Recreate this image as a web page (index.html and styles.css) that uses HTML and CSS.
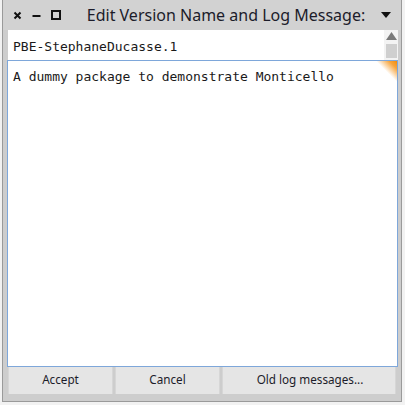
FILE: index.html
```html
<!DOCTYPE html>
<html>
<head>
<meta charset="utf-8">
<link rel="stylesheet" href="styles.css">
</head>
<body>
<div class="window">
  <div class="titlebar">
    <div class="controls">
      <svg class="ctl" width="9" height="9" viewBox="0 0 9 9"><path d="M1.5 1.5 L7.5 7.5 M7.5 1.5 L1.5 7.5" stroke="#111" stroke-width="2"/></svg>
      <svg class="ctl" width="9" height="9" viewBox="0 0 9 9"><path d="M0.5 5 H8.5" stroke="#111" stroke-width="2"/></svg>
      <svg class="ctl" width="10" height="10" viewBox="0 0 10 10"><rect x="1" y="1" width="8" height="8" fill="none" stroke="#111" stroke-width="2"/></svg>
    </div>
    <div class="title">Edit Version Name and Log Message:</div>
    <svg class="menu" width="10" height="6" viewBox="0 0 10 6"><path d="M0 0 H10 L5 6 Z" fill="#111"/></svg>
  </div>
  <div class="content">
    <div class="namerow">
      <div class="namefield">PBE-StephaneDucasse.1</div>
      <div class="scrollbar">
        <svg class="arrow" width="11" height="8" viewBox="0 0 11 8"><path d="M0 8 L5.5 0 L11 8 Z" fill="#7a7a7a"/></svg>
        <div class="thumb"></div>
      </div>
    </div>
    <div class="textarea">
      <div class="text">A dummy package to demonstrate Monticello</div>
      <div class="corner"></div>
    </div>
    <div class="buttons">
      <div class="btn btn-fixed">Accept</div>
      <div class="btn btn-fixed">Cancel</div>
      <div class="btn btn-grow">Old log messages...</div>
    </div>
  </div>
</div>
</body>
</html>
```

FILE: styles.css
```css
html, body {
  margin: 0;
  padding: 0;
  background: #f2f2f2;
}
body {
  width: 405px;
  height: 405px;
}
.window {
  margin-left: 2px;
  width: 400px;
  height: 402px;
  box-sizing: border-box;
  background: #cdcdcd;
  border: 1px solid #9a9a9a;
  border-top: none;
  display: flex;
  flex-direction: column;
  font-family: "Noto Sans", "DejaVu Sans", sans-serif;
  color: #1a1a1a;
}
.titlebar {
  height: 30px;
  display: flex;
  align-items: center;
  position: relative;
  background: #d2d2d2;
}
.controls {
  display: flex;
  align-items: center;
  gap: 10px;
  padding-left: 10px;
}
.ctl {
  display: block;
}
.title {
  flex: 1;
  text-align: center;
  font-size: 16px;
  padding-left: 16px;
  color: #1c1c2a;
  white-space: nowrap;
}
.menu {
  margin-right: 10px;
  margin-left: 6px;
}
.content {
  flex: 1;
  display: flex;
  flex-direction: column;
  padding: 0 3px 7px 4px;
}
.namerow {
  height: 30px;
  display: flex;
  margin-left: 1px;
}
.namefield {
  flex: 1;
  background: #ffffff;
  font-family: "DejaVu Sans Mono", monospace;
  font-size: 13px;
  padding-left: 5px;
  line-height: 30px;
  padding-top: 2px;
  box-sizing: border-box;
  color: #1a1a1a;
}
.scrollbar {
  width: 14px;
  background: #f3f3f3;
  display: flex;
  flex-direction: column;
  align-items: center;
}
.arrow {
  margin-top: 2px;
  display: block;
}
.thumb {
  margin-top: 4px;
  width: 11px;
  height: 14px;
  background: #cfcfcf;
}
.textarea {
  flex: 1;
  position: relative;
  background: #ffffff;
  border: 1px solid #7ea7da;
}
.text {
  font-family: "DejaVu Sans Mono", monospace;
  font-size: 13px;
  padding: 7px 0 0 5px;
  line-height: 17px;
  color: #1a1a1a;
}
.corner {
  position: absolute;
  top: 0;
  right: 0;
  width: 22px;
  height: 22px;
  background: linear-gradient(to bottom left, #f28c0a 0%, #f6a43c 18%, rgba(255,255,255,0) 48%);
}
.buttons {
  height: 27px;
  display: flex;
  gap: 2px;
  margin: 0 2px 0 1px;
}
.btn {
  background: #e5e5e5;
  border-left: 1px solid #d6d6d6;
  border-right: 1px solid #d6d6d6;
  box-sizing: border-box;
  font-size: 11.7px;
  line-height: 25px;
  text-align: center;
  color: #1c1c2a;
}
.btn-fixed {
  width: 105px;
}
.btn-grow {
  flex: 1;
  padding-left: 2px;
}
```
